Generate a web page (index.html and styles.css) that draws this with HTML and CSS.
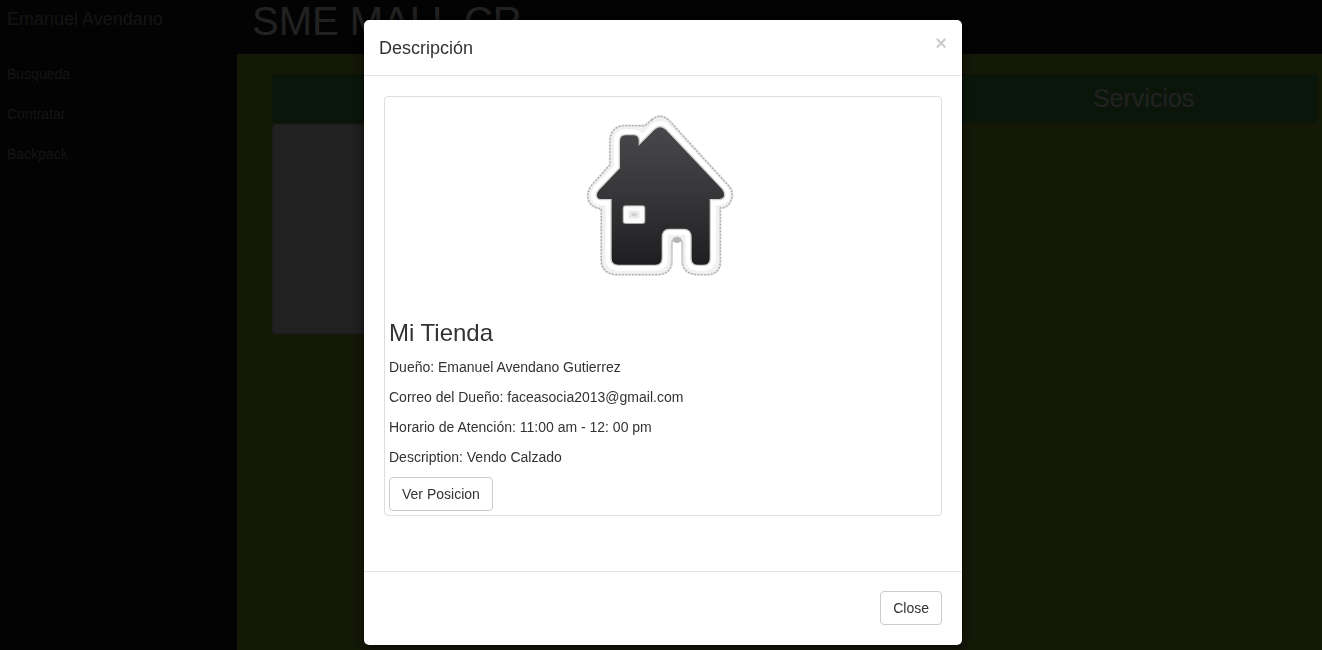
FILE: index.html
```html
<!DOCTYPE html>
<html lang="es">
<head>
  <meta charset="utf-8">
  <meta name="viewport" content="width=device-width, initial-scale=1">
  <title>SME MALL CR</title>
  <link rel="stylesheet" href="styles.css">
</head>
<body>
  <div class="page">
    <nav class="sidebar">
      <a class="sidebar-user" href="#">Emanuel Avendano</a>
      <a class="sidebar-link" href="#">Busqueda</a>
      <a class="sidebar-link" href="#">Contratar</a>
      <a class="sidebar-link" href="#">Backpack</a>
    </nav>
    <div class="main">
      <header class="topbar">
        <h1 class="brand">SME MALL CR</h1>
      </header>
      <main class="columns">
        <section class="column">
          <div class="column-title"></div>
          <div class="card"></div>
        </section>
        <section class="column">
          <div class="column-title"></div>
        </section>
        <section class="column">
          <h2 class="column-title">Servicios</h2>
        </section>
      </main>
    </div>
  </div>

  <div class="backdrop">
    <div class="modal" role="dialog" aria-modal="true" aria-labelledby="modal-title">
      <div class="modal-header">
        <h4 class="modal-title" id="modal-title">Descripción</h4>
        <button class="modal-dismiss" type="button" aria-label="Cerrar">×</button>
      </div>
      <div class="modal-body">
        <div class="thumbnail">
          <svg class="store-image" viewBox="-21 3 600 600" role="img" aria-label="Tienda">
            <defs>
              <linearGradient id="roof" x1="0" y1="0" x2="0" y2="1">
                <stop offset="0" stop-color="#48484a"/>
                <stop offset="0.5" stop-color="#363638"/>
                <stop offset="1" stop-color="#1f1d1f"/>
              </linearGradient>
              <path id="house" d="M254 89Q270 74 287 89L456 268Q466 282 460 292Q456 297 446 297H419V474Q419 494 402 494H382Q365 494 365 474V412Q365 386 341 386H298Q275 386 275 412V474Q275 494 256 494H145Q125 494 125 474V297H94Q82 297 81 287Q80 279 88 270L150 205V124Q150 106 167 106H190Q205 106 206 121V137Z"/>
              <path id="edge" d="M245 60Q270 38 296 60L480 262Q494 284 480 308Q470 324 451 324V488Q449 521 415 524H378Q342 521 337 488V432Q334 412 321 412Q308 412 305 432V488Q302 520 268 524H135Q98 519 94 486V326Q66 324 56 302Q48 280 64 257L120 194V120Q124 80 160 77H206Q220 78 226 76Z"/>
            </defs>
            <g stroke-linejoin="round">
              <use href="#edge" fill="#f1f1f1" stroke="#e6e6e6" stroke-width="7"/>
              <use href="#edge" fill="none" stroke="#a8a8a8" stroke-width="4" stroke-dasharray="5 5"/>
              <use href="#house" fill="#fff" stroke="#fff" stroke-width="36"/>
              <use href="#house" fill="none" stroke="#cfcfcf" stroke-width="8"/>
            </g>
            <path d="M309 510V432Q312 416 321 416Q330 416 333 432V510Z" fill="#fff"/>
            <path d="M305 496V432Q308 413 321 413Q334 413 337 432V496" fill="none" stroke="#cfcfcf" stroke-width="5"/>
            <path d="M307 424Q309 412 321 412Q333 412 335 424L321 430Z" fill="#b5b5b5"/>
            <use href="#house" fill="url(#roof)"/>
            <rect x="158" y="316" width="68" height="56" rx="8" fill="#a5a5a5"/>
            <rect x="161" y="319" width="62" height="50" rx="6" fill="#fbfbfb"/>
            <rect x="176" y="333" width="32" height="22" rx="5" fill="#e8e8e8"/>
            <rect x="185" y="339" width="14" height="9" rx="4" fill="#cfcfcf"/>
          </svg>
          <h3 class="store-name">Mi Tienda</h3>
          <p class="store-line">Dueño: Emanuel Avendano Gutierrez</p>
          <p class="store-line">Correo del Dueño: faceasocia2013@gmail.com</p>
          <p class="store-line">Horario de Atención: 11:00 am - 12: 00 pm</p>
          <p class="store-line">Description: Vendo Calzado</p>
          <button class="btn" type="button">Ver Posicion</button>
        </div>
      </div>
      <div class="modal-footer">
        <button class="btn" type="button">Close</button>
      </div>
    </div>
  </div>
</body>
</html>
```
FILE: styles.css
```css
*,
*::before,
*::after {
  box-sizing: border-box;
}

body {
  margin: 0;
  background: #171717;
  color: #333;
  font: 14px/20px "Liberation Sans", Arial, sans-serif;
}

h1, h2, h3, h4, p {
  margin: 0;
  font-weight: 400;
}

.page {
  display: flex;
  min-height: 100vh;
}

.sidebar {
  display: flex;
  flex-direction: column;
  flex: 0 0 237px;
  padding: 9px 7px;
}

.sidebar-user,
.sidebar-link {
  color: #999;
  text-decoration: none;
}

.sidebar-user {
  margin-bottom: 25px;
  font-size: 18px;
}

.sidebar-link {
  padding: 10px 0;
}

.main {
  display: flex;
  flex: 1;
  flex-direction: column;
}

.topbar {
  height: 54px;
  padding: 0 15px;
}

.brand {
  color: #fff;
  font-size: 40px;
  line-height: 42px;
}

.columns {
  display: grid;
  flex: 1;
  grid-template-columns: repeat(3, 1fr);
  align-items: start;
  padding: 20px 4px 20px 35px;
  background: #9ab936;
}

.column {
  display: grid;
  gap: 1px;
}

.column-title {
  height: 49px;
  border-radius: 4px;
  background: #55aa55;
  color: #fff;
  font-size: 25px;
  line-height: 49px;
  text-align: center;
}

.card {
  height: 210px;
  border: 1px solid #ddd;
  border-radius: 4px;
  background: #fff;
}

.backdrop {
  position: fixed;
  inset: 0;
  display: flex;
  align-items: flex-start;
  justify-content: center;
  padding: 19px 0 0 4px;
  overflow: hidden;
  background: rgba(0, 0, 0, 0.87);
}

.modal {
  width: 100%;
  max-width: 600px;
  border: 1px solid rgba(0, 0, 0, 0.2);
  border-radius: 6px;
  background: #fff;
  background-clip: padding-box;
  box-shadow: 0 5px 15px rgba(0, 0, 0, 0.5);
}

.modal-header {
  display: flex;
  align-items: flex-start;
  justify-content: space-between;
  padding: 15px 15px 14px;
  border-bottom: 1px solid #e5e5e5;
}

.modal-title {
  font-size: 18px;
  line-height: 26px;
}

.modal-dismiss {
  padding: 0;
  border: 0;
  background: none;
  color: #000;
  font: bold 20px/16px "Liberation Sans", Arial, sans-serif;
  opacity: 0.2;
}

.modal-body {
  padding: 20px;
}

.thumbnail {
  margin-bottom: 20px;
  padding: 4px;
  border: 1px solid #ddd;
  border-radius: 4px;
}

.store-image {
  display: block;
  width: 200px;
  height: 200px;
  margin: 0 auto;
}

.store-name {
  margin: 18px 0 11px;
  font-size: 24px;
  line-height: 27px;
}

.store-line {
  margin-bottom: 10px;
}

.btn {
  display: block;
  padding: 6px 12px;
  border: 1px solid #ccc;
  border-radius: 4px;
  background: #fff;
  color: #333;
  font: inherit;
}

.modal-footer {
  display: flex;
  justify-content: flex-end;
  margin-top: 15px;
  padding: 19px 20px 20px;
  border-top: 1px solid #e5e5e5;
}
```
